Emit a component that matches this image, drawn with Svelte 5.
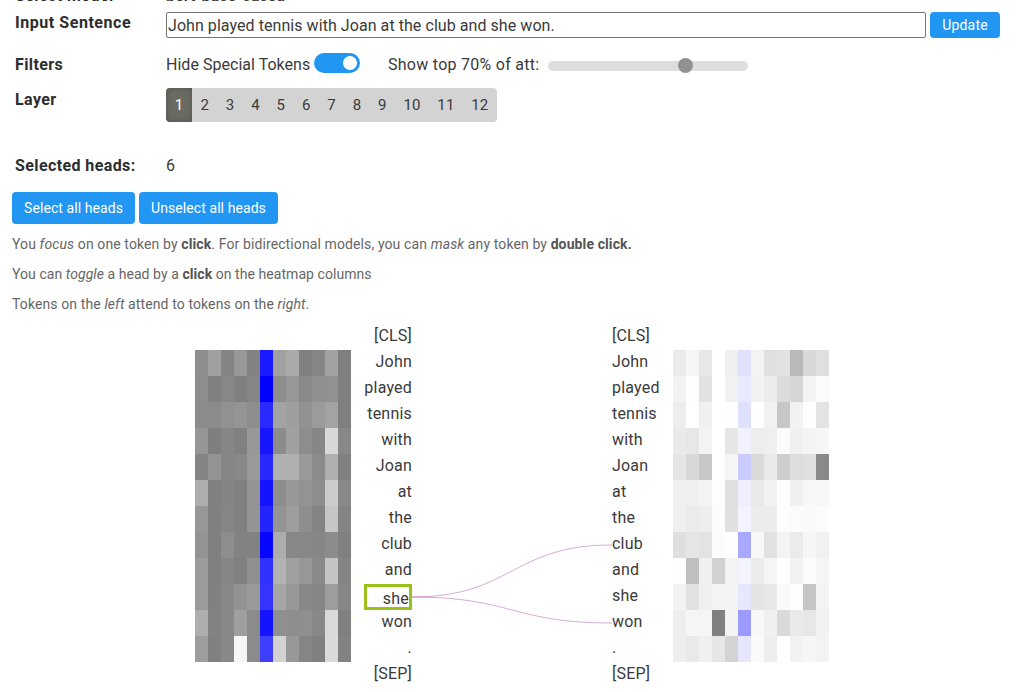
<script>
  const tokens = ['[CLS]', 'John', 'played', 'tennis', 'with', 'Joan', 'at', 'the', 'club', 'and', 'she', 'won', '.', '[SEP]'];
  const layers = Array.from({ length: 12 }, (_, i) => i + 1);
  const selectedHead = 5;

  const leftHeat = `8e a0 84 98 82 1a a1 a9 80 86 a2 7f
8d 80 87 80 85 00 8d 97 89 90 91 7f
8b 8b 91 94 8d 2a a3 9e 91 9b a3 7f
96 7f 86 80 98 16 8c a0 8d 86 d8 88
84 93 86 88 9a 29 b0 b0 9a 8b b0 80
ad 80 84 80 94 14 8e 98 93 8d cc 88
97 80 85 80 94 24 94 9d 8e 84 c6 84
93 80 8d 82 82 07 ac 87 87 86 8c 80
9c 80 86 80 8f 30 b3 a0 98 89 c4 84
9b 80 88 93 9a 35 a6 98 87 85 9d 86
ae 82 88 9f 8b 14 8f 8e 8f 88 d9 80
9d 80 88 f6 8b 3e d2 98 85 80 da 82`;

  const rightHeat = `eb f5 e8 ff ef e1 f3 df e2 b9 d8 df
f3 fd e2 ff f1 e9 f2 ec db d6 f3 fb
ed ff f0 ff fe e0 ff f2 c7 f2 fe e3
ea e7 f3 ff e6 f1 ed ef fb f0 f4 f6
e6 d8 c8 ff f5 cb da e9 ce dd e0 89
f0 f0 f4 fd e0 ee e9 f2 fd f0 f8 f7
ef eb ee fc e0 f3 ec ec fd fb fa fc
df e6 e3 fc fe a9 f8 e2 f3 eb f6 f1
fe bf f0 d1 f3 f4 ec f5 fe f2 fc f5
f2 e1 ef f4 f4 e7 e4 e8 fa fd c5 f3
ee f6 f5 80 f4 9a f8 f0 da ea e7 f2
ee e9 f0 e6 d3 e6 fa ee ff f2 f6 f3`;

  const parse = (s) =>
    s.split('\n').flatMap((row) =>
      row.trim().split(' ').map((v, i) => (i === selectedHead ? `#${v}${v}ff` : `#${v}${v}${v}`))
    );
</script>

{#snippet heatmap(data)}
  <svg class="heat" width="156" height="312" shape-rendering="crispEdges">
    {#each parse(data) as fill, i}
      <rect x={(i % 12) * 13} y={Math.floor(i / 12) * 26} width="13" height="26" {fill} />
    {/each}
  </svg>
{/snippet}

<main>
  <section class="controls">
    <div class="row model"><b>Select model</b><b class="name">bert-base-cased</b></div>
    <div class="row sentence">
      <b>Input Sentence</b>
      <input type="text" value="John played tennis with Joan at the club and she won." />
      <button class="update">Update</button>
    </div>
    <div class="row filters">
      <b>Filters</b>
      <span class="hide">Hide Special Tokens</span>
      <span class="switch"><i></i></span>
      <span class="top">Show top 70% of att:</span>
      <span class="slider"><i></i></span>
    </div>
    <div class="row layer">
      <b>Layer</b>
      <div class="layers">
        {#each layers as n}<span class:active={n === 1} class:wide={n > 9}>{n}</span>{/each}
      </div>
    </div>
    <div class="row heads"><b>Selected heads:</b><span>6</span></div>
  </section>

  <div class="buttons">
    <button class="all">Select all heads</button>
    <button class="none">Unselect all heads</button>
  </div>

  <section class="help">
    <p>You <em>focus</em> on one token by <b>click</b>. For bidirectional models, you can <em>mask</em> any token by <b>double click.</b></p>
    <p class="toggle">You can <em>toggle</em> a head by a <b>click</b> on the heatmap columns</p>
    <p>Tokens on the <em>left</em> attend to tokens on the <em>right</em>.</p>
  </section>

  <section class="vis">
    {@render heatmap(leftHeat)}
    <div class="tokens left">
      {#each tokens as t, i}<div class:selected={i === 10}>{t}</div>{/each}
    </div>
    <svg class="links" width="200" height="364" fill="none" stroke="#800080" stroke-opacity="0.33">
      <path d="M0 273C100 273 100 221 200 221" />
      <path d="M0 273C100 273 100 299 200 299" />
    </svg>
    <div class="tokens right">
      {#each tokens as t}<div>{t}</div>{/each}
    </div>
    {@render heatmap(rightHeat)}
  </section>
</main>

<style>
  :global(body) { background: #fff; overflow: hidden; }
  main {
    width: 1019px; height: 692px; overflow: hidden; box-sizing: border-box;
    font: 16px/24px Roboto, "Open Sans", sans-serif; color: #3a3a3a;
    letter-spacing: 0.2px; white-space: nowrap;
  }
  .row { display: flex; align-items: flex-start; padding-left: 15px; }
  .row > b:first-child { width: 151px; flex: none; font-weight: 700; color: #2d2d2d; letter-spacing: 0.4px; }
  .model { height: 12px; }
  .model b { margin-top: -16px; }
  .model .name { letter-spacing: 0; }
  .sentence { height: 38px; }
  .sentence > b { margin-top: -1px; }
  .sentence > b:first-child { letter-spacing: 0.55px; }
  input {
    box-sizing: border-box; width: 760px; height: 26px; padding: 1px; margin: 0 4px 0 0;
    border: 1px solid #767676; border-radius: 2px; font: inherit; color: #3a3a3a; letter-spacing: 0.06px; outline: 0;
  }
  button {
    border: 0; border-radius: 4px; padding: 0; margin: 0; background: #2196f3; color: #fff;
    font: 14px/20px Roboto, sans-serif; letter-spacing: 0.08px; height: 32px;
  }
  .update { width: 70px; height: 26px; letter-spacing: 0.2px; }
  .filters { height: 38px; }
  .filters > b, .hide, .top { margin-top: 3px; }
  .hide { width: 148px; letter-spacing: 0.03px; }
  .switch { width: 46px; height: 20px; border-radius: 10px; background: #2196f3; margin-top: 3px; display: flex; justify-content: flex-end; box-sizing: border-box; padding: 3px; }
  .switch i { width: 14px; height: 14px; border-radius: 50%; background: #fff; }
  .top { width: 160px; margin-left: 28px; letter-spacing: 0.27px; }
  .slider { width: 200px; height: 10px; border-radius: 5px; background: #dedede; margin-top: 11px; display: flex; align-items: center; box-sizing: border-box; padding-left: 130px; }
  .slider i { width: 15px; height: 15px; flex: none; border-radius: 50%; background: #919191; margin-top: -1px; }
  .layer { height: 66px; }
  .layers { display: flex; height: 34px; background: #d3d3d3; border-radius: 4px; overflow: hidden; font-size: 15px; line-height: 35px; text-align: center; }
  .layers span { width: 25.4px; }
  .layers .wide { width: 33.9px; }
  .layers .active { width: 26px; background: #6a6c64; color: #fff; box-shadow: inset 0 0 6px rgba(0, 0, 0, 0.25); }
  .heads { height: 38px; }
  .buttons { display: flex; gap: 4px; padding-left: 12px; }
  .all { width: 123px; }
  .none { width: 139px; }
  .help { padding: 10px 0 0 12px; font-size: 14px; line-height: 20px; color: #666; letter-spacing: 0.11px; }
  .help p { margin: 0 0 10px; }
  .help .toggle { letter-spacing: 0.06px; }
  .help b { color: #555; }
  .vis { display: flex; align-items: flex-start; padding: 0 0 0 195px; margin-top: -1px; height: 364px; }
  .heat { display: block; margin-top: 27px; flex: none; }
  .tokens { margin-top: 1px; }
  .tokens div { height: 26px; box-sizing: border-box; line-height: 24px; }
  .left { width: 48px; margin-left: 13px; text-align: right; }
  .left .selected { border: 3px solid #9ac01c; line-height: 23px; }
  .links { display: block; flex: none; margin-top: 1px; }
  .right { width: 61px; }
</style>
